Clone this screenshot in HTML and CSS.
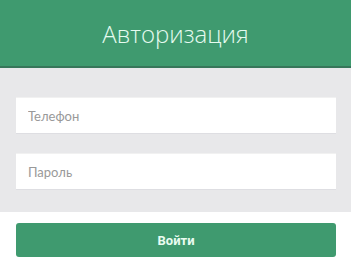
FILE: index.html
```html
<!DOCTYPE html>
<html lang="ru">
    <head>
        <meta charset="UTF-8">
        <title>Авторизация</title>
        <link rel="stylesheet" href="styles.css">
    </head>
    <body>
        <div class="header">Авторизация</div>
        <form class="login">
            <div class="fields">
                <input type="text" class="field" placeholder="Телефон">
                <input type="password" class="field" placeholder="Пароль">
            </div>
            <div class="actions">
                <button type="button" class="submit">Войти</button>
            </div>
        </form>
    </body>
</html>
```

FILE: styles.css
```css
body {
    margin: 0;
    background: #fff;
    font-family: "Open Sans", "Liberation Sans", sans-serif;
}

.header {
    height: 66px;
    background-color: #3f9a6f;
    border-bottom: 2px solid #37765a;
    color: #e6fbef;
    font-size: 24px;
    font-weight: 300;
    display: flex;
    justify-content: center;
    align-items: center;
}

.fields {
    background-color: #e8e8ea;
    padding: 29px 15px 22px 16px;
    display: flex;
    flex-direction: column;
    gap: 19px;
}

.field {
    box-sizing: border-box;
    height: 37px;
    width: 100%;
    border: none;
    border-top: 1px solid #f1f1f1;
    border-bottom: 1px solid #dedee2;
    background: #fff;
    padding: 0 12px;
    font-family: Lato, "Open Sans", sans-serif;
    font-size: 13px;
    color: #333;
}

.field::placeholder {
    color: #999;
}

.actions {
    padding: 11px 15px 0 16px;
}

.submit {
    width: 100%;
    height: 34px;
    border: none;
    border-radius: 3px;
    background-color: #3f9a6f;
    color: #eafcf1;
    font-family: Roboto, "Open Sans", sans-serif;
    font-size: 13px;
    font-weight: 700;
}
```
